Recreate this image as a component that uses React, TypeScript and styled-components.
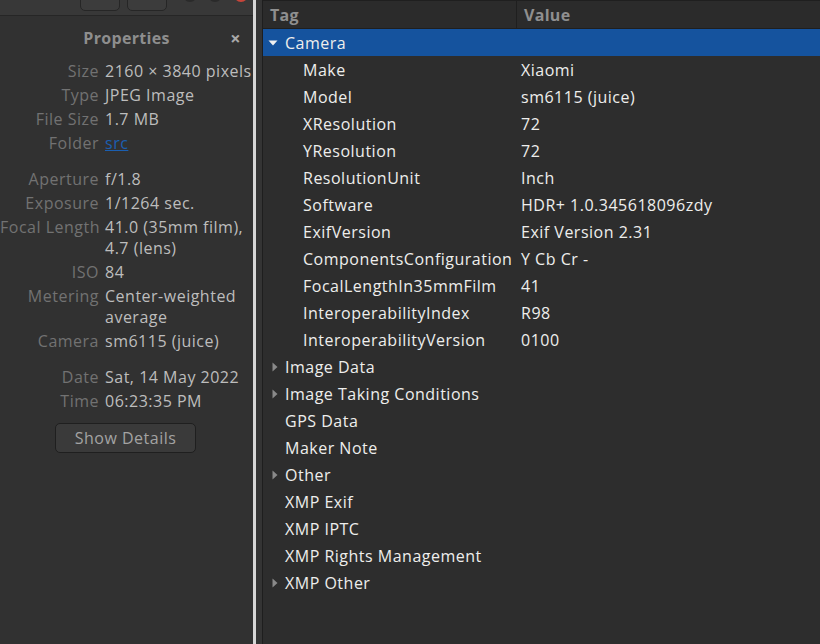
import React from "react";
import styled, { createGlobalStyle } from "styled-components";

const Global = createGlobalStyle`
  html, body { margin: 0; padding: 0; background: #2d2d2d; }
  body { font-family: "Open Sans", "Noto Sans", sans-serif; }
  * { box-sizing: border-box; }
`;

const Page = styled.div`
  display: flex;
  width: 820px;
  height: 644px;
  overflow: hidden;
  font-size: 16px;
  letter-spacing: 0.5px;
`;

const LeftPane = styled.div`
  width: 253px;
  flex: none;
  display: flex;
  flex-direction: column;
  background: #313131;
  overflow: hidden;
`;

const TopStrip = styled.div`
  height: 16px;
  flex: none;
  background: #383838;
  border-bottom: 1px solid #262626;
  position: relative;
  overflow: hidden;
`;

const StripButton = styled.div<{ $left: number }>`
  position: absolute;
  left: ${(p) => p.$left}px;
  top: -20px;
  width: 40px;
  height: 31px;
  border: 1px solid #262626;
  border-radius: 5px;
  background: #3c3c3c;
`;

const StripDot = styled.div<{ $left: number; $color: string }>`
  position: absolute;
  left: ${(p) => p.$left}px;
  top: -12px;
  width: 14px;
  height: 14px;
  border-radius: 50%;
  background: ${(p) => p.$color};
`;

const PropHeader = styled.div`
  height: 44px;
  display: flex;
  align-items: center;
  justify-content: center;
  position: relative;
`;

const PropTitle = styled.div`
  font-weight: 700;
  font-size: 16px;
  letter-spacing: 0.3px;
  color: #8e8e8e;
`;

const CloseX = styled.div`
  position: absolute;
  right: 12px;
  top: 10px;
  font-size: 18px;
  color: #a9a9a9;
  font-weight: 700;
`;

const PropList = styled.div`
  display: flex;
  flex-direction: column;
  padding-top: 1px;
`;

const Group = styled.div`
  display: grid;
  grid-template-columns: 99px 1fr;
  column-gap: 6px;
  row-gap: 3px;
  margin-bottom: 15px;
`;

const Label = styled.div`
  text-align: right;
  color: #727272;
  line-height: 21px;
  white-space: nowrap;
`;

const Value = styled.div`
  color: #bdbdbd;
  line-height: 21px;
  white-space: nowrap;
`;

const LinkValue = styled(Value)`
  color: #1b5fb1;
  text-decoration: underline;
`;

const ButtonRow = styled.div`
  display: flex;
  padding-left: 55px;
  margin-top: -4px;
`;

const DetailsButton = styled.button`
  width: 141px;
  height: 30px;
  border: 1px solid #1f1f1f;
  border-radius: 5px;
  background: #3a3a3a;
  color: #a3a3a3;
  font-family: inherit;
  font-size: 16px;
  letter-spacing: 0.5px;
  padding: 0;
`;

const Divider = styled.div`
  width: 10px;
  flex: none;
  display: flex;
`;

const DividerLight = styled.div`
  width: 3px;
  background: #d6d6d6;
`;

const DividerDark = styled.div`
  flex: 1;
  background: #343434;
  border-right: 1px solid #1e1e1e;
`;

const TreePane = styled.div`
  flex: 1;
  display: flex;
  flex-direction: column;
  background: #2d2d2d;
  border-top: 1px solid #1f1f1f;
`;

const HeaderRow = styled.div`
  height: 28px;
  display: flex;
  background: #2b2b2b;
  border-bottom: 1px solid #1f1f1f;
`;

const HeaderCell = styled.div<{ $width?: number }>`
  ${(p) => (p.$width ? `width: ${p.$width}px; flex: none;` : "flex: 1;")}
  padding-left: 7px;
  display: flex;
  align-items: center;
  font-weight: 700;
  color: #8f8f8f;
  letter-spacing: 0.3px;
  border-right: ${(p) => (p.$width ? "1px solid #1f1f1f" : "none")};
`;

const Row = styled.div<{ $selected?: boolean }>`
  height: 27px;
  display: flex;
  align-items: center;
  background: ${(p) => (p.$selected ? "#15539e" : "transparent")};
  color: #eeeeec;
`;

const TagCell = styled.div<{ $depth: number }>`
  width: 254px;
  flex: none;
  display: flex;
  align-items: center;
  padding-left: ${(p) => (p.$depth ? 40 : 0)}px;
  white-space: nowrap;
`;

const ArrowBox = styled.div<{ $open?: boolean }>`
  width: 22px;
  flex: none;
  display: flex;
  align-items: center;
  padding-left: ${(p) => (p.$open ? 5 : 9)}px;
`;

const ValueCell = styled.div`
  flex: 1;
  padding-left: 4px;
  white-space: nowrap;
`;

const Arrow = ({ open }: { open: boolean }) =>
  open ? (
    <svg width="10" height="6" viewBox="0 0 10 6">
      <path d="M0.5 0.5 L9.5 0.5 L5 5.5 Z" fill="#f0f0f0" />
    </svg>
  ) : (
    <svg width="6" height="10" viewBox="0 0 6 10">
      <path d="M0.5 0.5 L5.5 5 L0.5 9.5 Z" fill="#8a8a8a" />
    </svg>
  );

type Node = { tag: string; value?: string; depth: number; arrow?: "open" | "closed"; selected?: boolean };

const rows: Node[] = [
  { tag: "Camera", depth: 0, arrow: "open", selected: true },
  { tag: "Make", value: "Xiaomi", depth: 1 },
  { tag: "Model", value: "sm6115 (juice)", depth: 1 },
  { tag: "XResolution", value: "72", depth: 1 },
  { tag: "YResolution", value: "72", depth: 1 },
  { tag: "ResolutionUnit", value: "Inch", depth: 1 },
  { tag: "Software", value: "HDR+ 1.0.345618096zdy", depth: 1 },
  { tag: "ExifVersion", value: "Exif Version 2.31", depth: 1 },
  { tag: "ComponentsConfiguration", value: "Y Cb Cr -", depth: 1 },
  { tag: "FocalLengthIn35mmFilm", value: "41", depth: 1 },
  { tag: "InteroperabilityIndex", value: "R98", depth: 1 },
  { tag: "InteroperabilityVersion", value: "0100", depth: 1 },
  { tag: "Image Data", depth: 0, arrow: "closed" },
  { tag: "Image Taking Conditions", depth: 0, arrow: "closed" },
  { tag: "GPS Data", depth: 0 },
  { tag: "Maker Note", depth: 0 },
  { tag: "Other", depth: 0, arrow: "closed" },
  { tag: "XMP Exif", depth: 0 },
  { tag: "XMP IPTC", depth: 0 },
  { tag: "XMP Rights Management", depth: 0 },
  { tag: "XMP Other", depth: 0, arrow: "closed" },
];

const groups: { label: string; value: React.ReactNode; link?: boolean }[][] = [
  [
    { label: "Size", value: "2160 × 3840 pixels" },
    { label: "Type", value: "JPEG Image" },
    { label: "File Size", value: "1.7 MB" },
    { label: "Folder", value: "src", link: true },
  ],
  [
    { label: "Aperture", value: "f/1.8" },
    { label: "Exposure", value: "1/1264 sec." },
    { label: "Focal Length", value: <>41.0 (35mm film),<br />4.7 (lens)</> },
    { label: "ISO", value: "84" },
    { label: "Metering", value: <>Center-weighted<br />average</> },
    { label: "Camera", value: "sm6115 (juice)" },
  ],
  [
    { label: "Date", value: "Sat, 14 May 2022" },
    { label: "Time", value: "06:23:35 PM" },
  ],
];

export default function App() {
  return (
    <>
      <Global />
      <Page>
        <LeftPane>
          <TopStrip>
            <StripButton $left={80} />
            <StripButton $left={127} />
            <StripDot $left={183} $color="#2a2a2a" />
            <StripDot $left={208} $color="#2a2a2a" />
            <StripDot $left={234} $color="#c7453a" />
          </TopStrip>
          <PropHeader>
            <PropTitle>Properties</PropTitle>
            <CloseX>×</CloseX>
          </PropHeader>
          <PropList>
            {groups.map((g, gi) => (
              <Group key={gi}>
                {g.map((it) => (
                  <React.Fragment key={it.label}>
                    <Label>{it.label}</Label>
                    {it.link ? <LinkValue>{it.value}</LinkValue> : <Value>{it.value}</Value>}
                  </React.Fragment>
                ))}
              </Group>
            ))}
            <ButtonRow>
              <DetailsButton>Show Details</DetailsButton>
            </ButtonRow>
          </PropList>
        </LeftPane>
        <Divider>
          <DividerLight />
          <DividerDark />
        </Divider>
        <TreePane>
          <HeaderRow>
            <HeaderCell $width={254}>Tag</HeaderCell>
            <HeaderCell>Value</HeaderCell>
          </HeaderRow>
          {rows.map((r) => (
            <Row key={r.tag} $selected={r.selected}>
              <TagCell $depth={r.depth}>
                {r.depth === 0 && (
                  <ArrowBox $open={r.arrow === "open"}>
                    {r.arrow && <Arrow open={r.arrow === "open"} />}
                  </ArrowBox>
                )}
                {r.tag}
              </TagCell>
              <ValueCell>{r.value}</ValueCell>
            </Row>
          ))}
        </TreePane>
      </Page>
    </>
  );
}
